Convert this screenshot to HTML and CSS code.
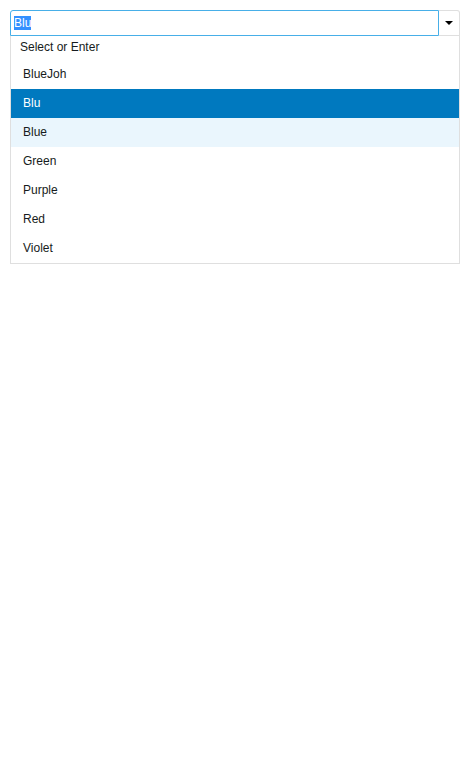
FILE: index.html
```html
<!DOCTYPE html>
<html lang="en">
<head>
<meta charset="utf-8">
<title>Color</title>
<link rel="stylesheet" href="styles.css">
</head>
<body>
<div class="combo">
  <div class="combo-field">
    <input class="combo-input" id="color" type="text" value="Blu" role="combobox" aria-labelledby="color-label" aria-expanded="true" aria-controls="color-list" autocomplete="off" spellcheck="false">
    <button class="combo-toggle" type="button" aria-label="Toggle list">
      <svg class="caret" width="8" height="4" viewBox="0 0 8 4" aria-hidden="true"><path d="M0 0h8L4 4z"/></svg>
    </button>
  </div>
  <div class="combo-panel">
    <label class="combo-hint" id="color-label" for="color">Select or Enter</label>
    <ul class="combo-list" id="color-list" role="listbox" aria-labelledby="color-label">
      <li class="option" role="option">BlueJoh</li>
      <li class="option option-selected" role="option" aria-selected="true">Blu</li>
      <li class="option option-hover" role="option">Blue</li>
      <li class="option" role="option">Green</li>
      <li class="option" role="option">Purple</li>
      <li class="option" role="option">Red</li>
      <li class="option" role="option">Violet</li>
    </ul>
  </div>
</div>
<script src="script.js"></script>
</body>
</html>
```
FILE: styles.css
```css
* {
  box-sizing: border-box;
}

body {
  margin: 10px;
  background: #fff;
  color: #161b20;
  font: 12px/14px "Liberation Sans", Arial, sans-serif;
}

.combo-field {
  display: flex;
  height: 26px;
}

.combo-input {
  flex: 1;
  min-width: 0;
  margin: 0;
  padding: 0 3px;
  border: 1px solid #47afe8;
  border-radius: 3px 0 0 0;
  outline: none;
  background: #fff;
  color: inherit;
  font: inherit;
}

.combo-input::selection {
  background: #3390ff;
  color: #fff;
}

.combo-toggle {
  display: flex;
  align-items: center;
  justify-content: center;
  width: 21px;
  margin: 0;
  padding: 0;
  border: 1px solid #dfdfdf;
  border-left: 0;
  border-radius: 0 3px 0 0;
  background: #fff;
}

.caret {
  fill: #000;
}

.combo-panel {
  border: 1px solid #dfdfdf;
  border-top: 0;
}

.combo-hint {
  display: block;
  padding: 4px 9px 6px;
}

.combo-list {
  margin: 0;
  padding: 0;
  list-style: none;
}

.option {
  padding: 0 12px;
  line-height: 29px;
}

.option-selected {
  background: #0079bf;
  color: #fff;
}

.option-hover {
  background: #eaf6fd;
}
```
FILE: script.js
```js
const input = document.getElementById("color");
input.focus();
input.select();
```
